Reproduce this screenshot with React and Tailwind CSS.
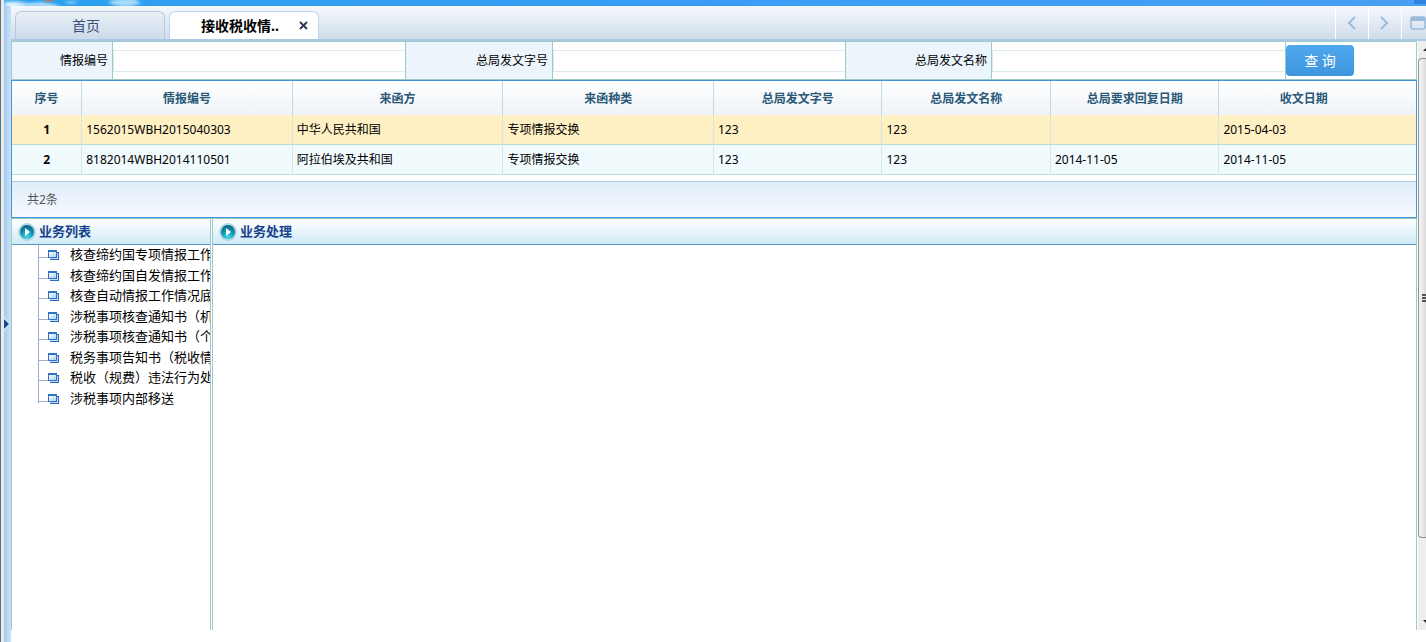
import { useState } from 'react';

const filters = [
  { id: 'infoNo', label: '情报编号' },
  { id: 'docNo', label: '总局发文字号' },
  { id: 'docName', label: '总局发文名称' },
];

const columns = [
  { title: '序号', width: 'w-[5%]' },
  { title: '情报编号', width: 'w-[15%]' },
  { title: '来函方', width: 'w-[15%]' },
  { title: '来函种类', width: 'w-[15%]' },
  { title: '总局发文字号', width: 'w-[12%]' },
  { title: '总局发文名称', width: 'w-[12%]' },
  { title: '总局要求回复日期', width: 'w-[12%]' },
  { title: '收文日期', width: 'w-[14%] pr-7' },
];

const rows = [
  ['1562015WBH2015040303', '中华人民共和国', '专项情报交换', '123', '123', '', '2015-04-03'],
  ['8182014WBH2014110501', '阿拉伯埃及共和国', '专项情报交换', '123', '123', '2014-11-05', '2014-11-05'],
];

const tasks = [
  '核查缔约国专项情报工作',
  '核查缔约国自发情报工作',
  '核查自动情报工作情况底',
  '涉税事项核查通知书（机',
  '涉税事项核查通知书（个',
  '税务事项告知书（税收情',
  '税收（规费）违法行为处',
  '涉税事项内部移送',
];

const Banner = () => (
  <div className="relative h-[6px] shrink-0 bg-gradient-to-r from-[#2ba0f0] via-[#3a9df5] to-[#489ff4]">
    <svg className="block" width="180" height="6" viewBox="0 0 180 6">
      <defs>
        <filter id="cloud">
          <feGaussianBlur stdDeviation="2 1" />
        </filter>
      </defs>
      <g filter="url(#cloud)">
        <path d="M0 1h14l10 2 14-1 12 2 8 3H0z" fill="#a9daf8" />
        <path d="M0 4l12-1 8 4H0z" fill="#e8f5fd" />
        <path d="M104 2l10-3h18l4 5-14 3-12-2z" fill="#a5daf9" />
        <path d="M60 1h14l-8 4z" fill="#7cc8f7" />
      </g>
      <path d="M40 0h10l-3 2h-5z" fill="#9c8478" />
    </svg>
    <div className="absolute right-0 top-0 h-1 w-3 bg-[#2f83dc]" />
  </div>
);

const ArrowBadge = () => (
  <svg className="shrink-0" width="18" height="18" viewBox="0 0 18 18">
    <defs>
      <radialGradient id="badge" cx="50%" cy="85%" r="80%">
        <stop offset="0" stopColor="#3fdcea" />
        <stop offset="0.55" stopColor="#1296b2" />
        <stop offset="1" stopColor="#0b6688" />
      </radialGradient>
    </defs>
    <circle cx="9" cy="9" r="9" fill="#b5d6e3" />
    <circle cx="9" cy="9" r="7" fill="url(#badge)" />
    <path d="M7 5l5 4-5 4z" fill="#fff" />
  </svg>
);

const TreeNode = ({ last }) => (
  <svg className="shrink-0" width="22" height="21" viewBox="0 0 22 21" shapeRendering="crispEdges">
    <defs>
      <linearGradient id="pane" x1="0" y1="0" x2="1" y2="1">
        <stop offset="0" stopColor="#fff" />
        <stop offset="1" stopColor="#a8d0f4" />
      </linearGradient>
    </defs>
    <rect width="1" height={last ? 14 : 21} fill="#9fb0cc" />
    <rect y="12" width="10" height="1" fill="#9fb0cc" />
    <path d="M12 7h9v8h-9z" fill="#2c68bc" />
    <path d="M12 8h8v6h-8z" fill="#bcd9f5" />
    <path d="M10 5h9v8h-9z" fill="#2f71cb" />
    <path d="M11 7h7v5h-7z" fill="url(#pane)" />
  </svg>
);

const Chevron = ({ d }) => (
  <svg width="10" height="14" viewBox="0 0 10 14" fill="none" stroke="#9bbbdc" strokeWidth="2">
    <path d={d} />
  </svg>
);

const TabBar = () => (
  <div className="flex h-[35px] shrink-0 justify-between border-b-2 border-[#a9c9e7] bg-gradient-to-b from-[#f5f9fd] to-[#cfdcea]">
    <div className="flex gap-1 pl-1 pt-[5px]">
      <button className="w-[150px] rounded-t-md border border-b-0 border-[#b7cadd] bg-gradient-to-b from-[#e9f0f7] to-[#ccdae9] pr-2 text-sm text-[#3b4d78]">
        首页
      </button>
      <div className="flex w-[150px] items-center rounded-t-md border border-b-0 border-[#bed5ef] bg-white pl-[31px]">
        <button className="text-sm font-bold text-black">接收税收情..</button>
        <button className="ml-5" aria-label="关闭">
          <svg width="9" height="9" viewBox="0 0 9 9" stroke="#31395e" strokeWidth="2">
            <path d="M1 1l7 7M8 1l-7 7" />
          </svg>
        </button>
      </div>
    </div>
    <div className="flex">
      <button className="flex w-[33px] items-center justify-center border-l border-white" aria-label="向左">
        <Chevron d="M8 1L2 7l6 6" />
      </button>
      <button className="flex w-[33px] items-center justify-center border-l border-white" aria-label="向右">
        <Chevron d="M1 1l6 6-6 6" />
      </button>
      <button className="flex w-[25px] items-center justify-end border-l border-white" aria-label="最大化">
        <svg width="16" height="14" viewBox="0 0 16 14">
          <rect x="1" y="1" width="14" height="12" rx="2" fill="none" stroke="#9bbbdc" strokeWidth="1.5" />
          <path d="M1 1h14v4H1z" fill="#9bbbdc" />
        </svg>
      </button>
    </div>
  </div>
);

const SearchForm = () => (
  <form
    className="grid h-[39px] shrink-0 grid-cols-[101fr_293fr_147fr_293fr_146fr_294fr_130fr] border border-[#9fc9c6]"
    onSubmit={(e) => e.preventDefault()}
  >
    {filters.map((f) => (
      <div key={f.id} className="contents">
        <label
          htmlFor={f.id}
          className="flex items-center justify-end border-r border-[#9fc9c6] bg-[#edf5fc] pr-1"
        >
          {f.label}
        </label>
        <div className="flex min-w-0 items-center border-r border-[#9fc9c6]">
          <input id={f.id} className="h-[22px] w-full border border-r-0 border-[#dbeaee] px-1 outline-none" />
        </div>
      </div>
    ))}
    <div className="flex items-center">
      <button className="h-[31px] w-[68px] rounded bg-gradient-to-b from-[#4fa7ee] to-[#3d95dd] pt-px text-sm text-white">
        查 询
      </button>
    </div>
  </form>
);

const ResultTable = () => {
  const [selected, setSelected] = useState(0);

  return (
    <section className="shrink-0 border border-[#4096d8]">
      <table className="w-full table-fixed border-separate border-spacing-0">
        <thead>
          <tr className="h-[34px] bg-gradient-to-b from-white to-[#eff3f8] text-[#2a5878]">
            {columns.map((c) => (
              <th key={c.title} className={`${c.width} border-r border-[#bfdcda] pt-px font-bold last:border-r-0`}>
                {c.title}
              </th>
            ))}
          </tr>
        </thead>
        <tbody>
          {rows.map((row, i) => (
            <tr
              key={row[0]}
              onClick={() => setSelected(i)}
              className={`h-[30px] ${selected === i ? 'bg-[#fff0c4]' : 'bg-[#f1fafd]'}`}
            >
              <td className="border-b border-r border-b-[#b9d9d4] border-r-[#d8e6e2] text-center font-bold">
                {i + 1}
              </td>
              {row.map((cell, j) => (
                <td key={j} className="border-b border-r border-b-[#b9d9d4] border-r-[#d8e6e2] px-1 last:border-r-0">
                  {cell}
                </td>
              ))}
            </tr>
          ))}
        </tbody>
      </table>
      <div className="mt-[6px] flex h-9 items-center border-t border-[#a9c9e7] bg-gradient-to-b from-[#e2edf9] to-[#f5f9fe] pl-[15px] text-[#555]">
        共2条
      </div>
    </section>
  );
};

const PanelTitle = ({ children }) => (
  <h2 className="flex h-[26px] shrink-0 items-center gap-[3px] border-b border-[#5b97c6] bg-gradient-to-b from-white to-[#d0eaf8] pl-[6px] text-[13px] font-bold text-[#15428b]">
    <ArrowBadge />
    {children}
  </h2>
);

const ScrollRail = () => (
  <div className="mb-3 ml-px flex w-2 shrink-0 flex-col overflow-hidden bg-[#eee]">
    <svg className="shrink-0" width="8" height="17" viewBox="0 0 8 17">
      <path d="M5 10l4-4v4z" fill="#222" />
    </svg>
    <div className="flex flex-6 items-center justify-end rounded-l-sm border border-r-0 border-[#909096] bg-gradient-to-r from-[#f6f6f6] to-[#dcdcdc]">
      <svg width="4" height="8" viewBox="0 0 4 8">
        <path d="M0 0h4v2H0zM0 3h4v2H0zM0 6h4v2H0z" fill="#555" />
      </svg>
    </div>
    <div className="flex-1" />
    <svg className="shrink-0" width="8" height="12" viewBox="0 0 8 12">
      <path d="M5 2h3v3z" fill="#222" />
    </svg>
  </div>
);

const App = () => (
  <div className="flex h-screen overflow-hidden bg-white font-['Noto_Sans','Noto_Sans_CJK_SC',sans-serif] text-xs text-black">
    <div className="w-px shrink-0 bg-[#6e6e6e]" />
    <div className="w-[3px] shrink-0 bg-[#e3ebf3]" />
    <div className="flex min-w-0 flex-1 flex-col">
      <Banner />
      <div className="flex min-h-0 flex-1">
        <button
          className="flex w-[7px] shrink-0 items-center bg-gradient-to-r from-[#a6c8ec] to-[#c9e2f8]"
          aria-label="展开"
        >
          <svg width="6" height="14" viewBox="0 0 6 14">
            <path d="M0 0l6 7-6 7z" fill="#e6f2fc" />
            <path d="M0 2l5 5-5 5z" fill="#134a92" />
          </svg>
        </button>
        <div className="flex min-w-0 flex-1 flex-col">
          <TabBar />
          <div className="flex min-h-0 flex-1">
            <main className="mb-3 flex min-w-0 flex-1 flex-col">
              <SearchForm />
              <ResultTable />
              <div className="flex min-h-0 flex-1 gap-px border-t border-[#9fc9c6]">
                <aside className="flex w-[200px] shrink-0 flex-col overflow-hidden border-x border-[#9fc9c6]">
                  <PanelTitle>业务列表</PanelTitle>
                  <ul className="pl-[26px] text-[13px]">
                    {tasks.map((task, i) => (
                      <li key={task} className="flex overflow-hidden odd:h-[21px] even:h-5">
                        <TreeNode last={i === tasks.length - 1} />
                        <a href="#" className="ml-[10px] whitespace-nowrap leading-[18px]">
                          {task}
                        </a>
                      </li>
                    ))}
                  </ul>
                </aside>
                <section className="flex min-w-0 flex-1 flex-col border-x border-[#9fc9c6]">
                  <PanelTitle>业务处理</PanelTitle>
                </section>
              </div>
            </main>
            <ScrollRail />
          </div>
        </div>
      </div>
    </div>
  </div>
);

export default App;
